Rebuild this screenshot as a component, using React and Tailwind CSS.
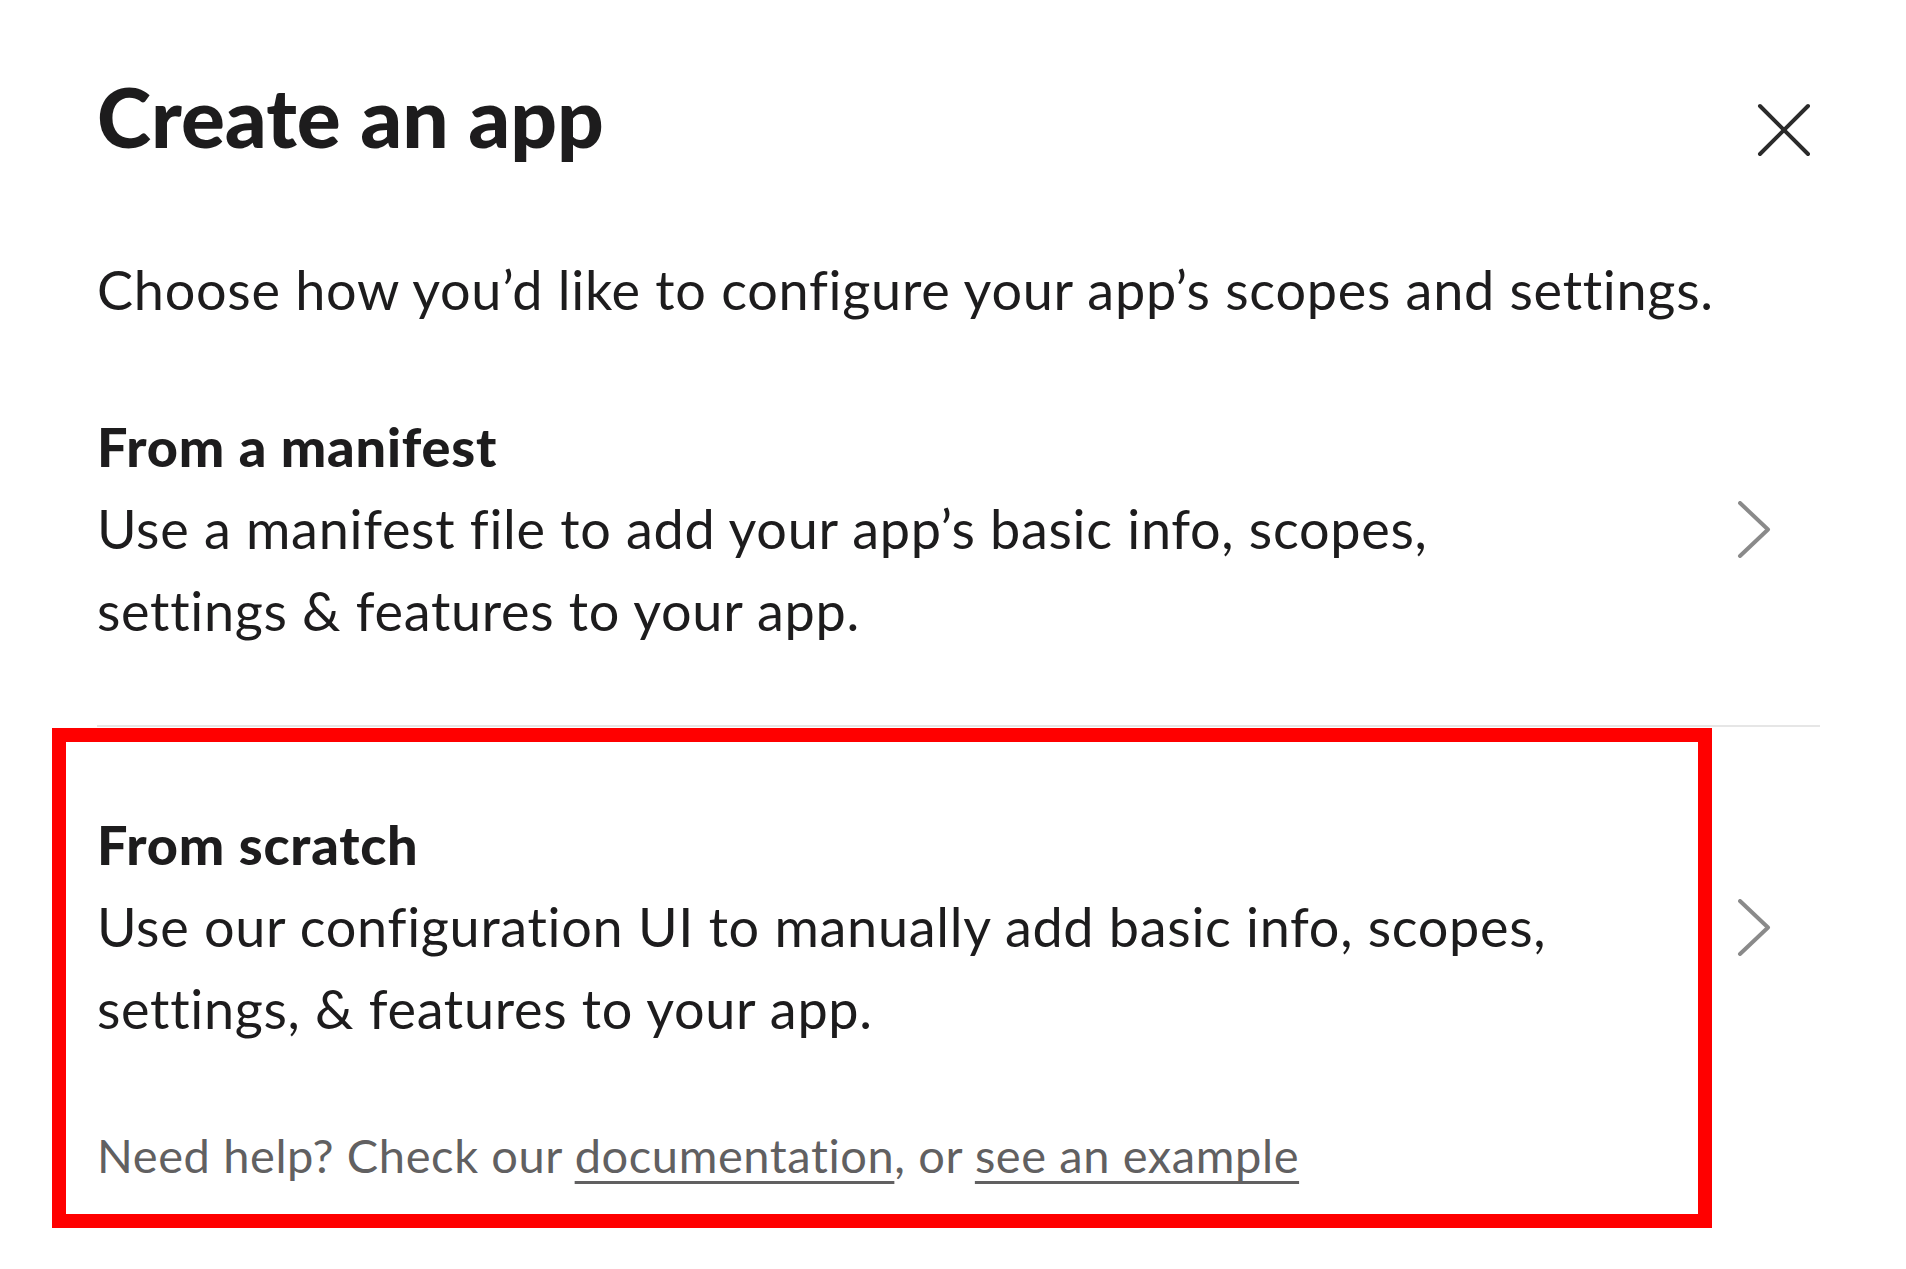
import React from 'react';

const FONT = { fontFamily: 'Lato, "Open Sans", "Liberation Sans", sans-serif' };

function Chevron() {
  return (
    <svg width="35" height="57" viewBox="0 0 35 57" className="shrink-0 mr-[48px]" fill="none">
      <path d="M3 2 L31 28.5 L3 55" stroke="#8a8a8a" strokeWidth="4" strokeLinecap="round" strokeLinejoin="round" />
    </svg>
  );
}

function CloseIcon() {
  return (
    <svg width="54" height="54" viewBox="0 0 54 54" fill="none">
      <path d="M3 3 L51 51 M51 3 L3 51" stroke="#2b2b2b" strokeWidth="4" strokeLinecap="round" />
    </svg>
  );
}

function Option({ title, lines }) {
  return (
    <div className="flex items-center">
      <div className="flex-1 text-[54px] leading-[82px] text-[#1d1c1d] tracking-[0.7px]">
        <div className="font-black tracking-[0.8px]">{title}</div>
        <div>
          {lines[0]}
          <br />
          {lines[1]}
        </div>
      </div>
      <Chevron />
    </div>
  );
}

export default function App() {
  return (
    <div className="min-h-screen w-full bg-white" style={FONT}>
      <div className="pl-[97px] pr-[86px] pt-[67px]">
        {/* header */}
        <div className="flex items-start justify-between">
          <h1 className="text-[82px] leading-[98px] font-black text-[#1d1c1d]">Create an app</h1>
          <button className="mt-[36px] mr-[9px]">
            <CloseIcon />
          </button>
        </div>

        <p className="mt-[84px] text-[54px] leading-[82px] text-[#1d1c1d] tracking-[0.72px]">
          Choose how you’d like to configure your app’s scopes and settings.
        </p>

        {/* option 1 */}
        <div className="mt-[75px] pb-[73px] border-b-2 border-[#e6e6e6]">
          <Option
            title="From a manifest"
            lines={['Use a manifest file to add your app’s basic info, scopes,', 'settings & features to your app.']}
          />
        </div>

        {/* option 2 */}
        <div className="relative pt-[77px] pb-[38px]">
          <Option
            title="From scratch"
            lines={['Use our configuration UI to manually add basic info, scopes,', 'settings, & features to your app.']}
          />
          <p className="mt-[70px] text-[47px] leading-[70px] text-[#616061] tracking-[0.6px]">
            Need help? Check our{' '}
            <a className="underline decoration-[3px] underline-offset-[8px]">documentation</a>, or{' '}
            <a className="underline decoration-[3px] underline-offset-[8px]">see an example</a>
          </p>

          {/* highlight annotation */}
          <div className="absolute left-[-45px] top-[1px] w-[1660px] h-[500px] border-[14px] border-[#ff0000] pointer-events-none" />
        </div>
      </div>
    </div>
  );
}
